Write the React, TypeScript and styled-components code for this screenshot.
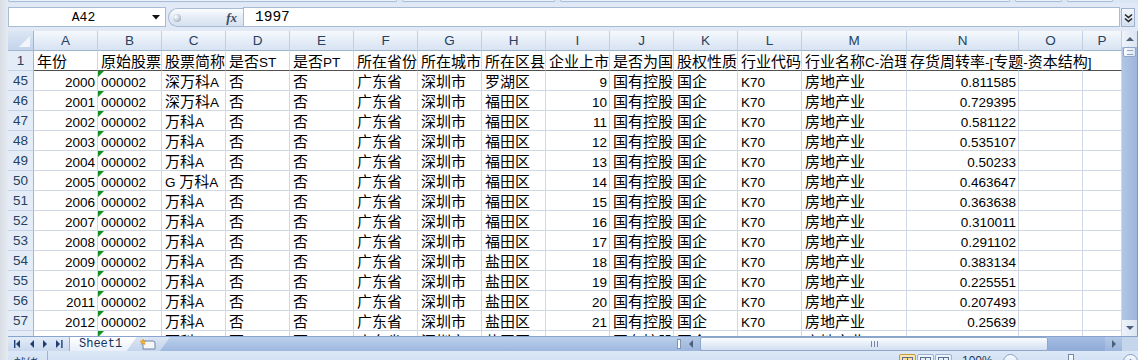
import React from 'react';
import styled, { createGlobalStyle } from 'styled-components';

const LATIN = `"Liberation Sans", Arial, sans-serif`;
const HAN = `"Noto Sans CJK SC", "Liberation Sans", sans-serif`;
const MONO = `"Liberation Mono", "DejaVu Sans Mono", monospace`;

const GlobalStyle = createGlobalStyle`
  html, body {
    margin: 0;
    padding: 0;
    background: #ffffff;
  }
  body {
    font-family: ${LATIN};
  }
`;

interface Column {
  name: string;
  width: number;
}

interface CellData {
  text: string;
  right?: boolean;
  flag?: boolean;
}

interface RowData {
  num: number;
  cells: CellData[];
}

const columns: Column[] = 'ABCDEFGHIJKL'
  .split('')
  .map((name) => ({ name, width: 64 }))
  .concat([
    { name: 'M', width: 105 },
    { name: 'N', width: 112 },
    { name: 'O', width: 64 },
    { name: 'P', width: 39 },
  ]);

const template = `26px ${columns.map((c) => `${c.width}px`).join(' ')}`;

const headerRow: string[] = [
  '年份',
  '原始股票',
  '股票简称',
  '是否ST',
  '是否PT',
  '所在省份',
  '所在城市',
  '所在区县',
  '企业上市',
  '是否为国',
  '股权性质',
  '行业代码',
  '行业名称C-治理',
  '存货周转率-[专题-资本结构]',
  '',
  '',
];

const names = ['深万科A', '深万科A', '万科A', '万科A', '万科A', 'G 万科A', '万科A', '万科A', '万科A', '万科A', '万科A', '万科A', '万科A', '万科A'];
const districts = ['罗湖区', ...Array(8).fill('福田区'), ...Array(5).fill('盐田区')];
const turnover = ['0.811585', '0.729395', '0.581122', '0.535107', '0.50233', '0.463647', '0.363638', '0.310011', '0.291102', '0.383134', '0.225551', '0.207493', '0.25639', ''];

const rows: RowData[] = names.map((name, i) => ({
  num: 45 + i,
  cells: [
    { text: String(2000 + i), right: true },
    { text: '000002', flag: true },
    { text: name },
    { text: '否' },
    { text: '否' },
    { text: '广东省' },
    { text: '深圳市' },
    { text: districts[i] },
    { text: i < 13 ? String(9 + i) : '', right: true },
    { text: '国有控股' },
    { text: '国企' },
    { text: 'K70' },
    { text: '房地产业' },
    { text: turnover[i], right: true },
    { text: '' },
    { text: '' },
  ],
}));

const ribbonGroups = [389, 153, 450, 47, 46];

// splits ascii runs from han runs so each gets its own font size
const Rich: React.FC<{ text: string }> = ({ text }) => (
  <>
    {text
      .split(/([\x20-\x7e]+)/)
      .filter(Boolean)
      .map((part, i) => (/^[\x20-\x7e]+$/.test(part) ? <Latin key={i}>{part}</Latin> : <span key={i}>{part}</span>))}
  </>
);

const Arrow: React.FC<{ dir: 'left' | 'right' | 'up' | 'down'; color?: string; size?: number }> = ({ dir, color = '#4c607d', size = 7 }) => {
  const pts = {
    left: '5,0 5,8 1,4',
    right: '1,0 1,8 5,4',
    up: '0,5 8,5 4,1',
    down: '0,1 8,1 4,5',
  }[dir];
  const vertical = dir === 'left' || dir === 'right';
  return (
    <svg width={vertical ? size - 1 : size + 1} height={vertical ? size + 1 : size - 1} viewBox={vertical ? '0 0 6 8' : '0 0 8 6'}>
      <polygon points={pts} fill={color} />
    </svg>
  );
};

export default function App() {
  return (
    <>
      <GlobalStyle />
      <Window>
        <Frame />
        <Main>
          <RibbonEdge>
            {ribbonGroups.map((w, i) => (
              <RibbonGroup key={i} $w={w} />
            ))}
          </RibbonEdge>

          <FormulaBar>
            <NameBox>
              <NameText>A42</NameText>
              <svg width="8" height="5" viewBox="0 0 8 5">
                <polygon points="0,0 8,0 4,4.5" fill="#111" />
              </svg>
            </NameBox>
            <FxPill>
              <Knob />
              <Fx>fx</Fx>
            </FxPill>
            <FormulaInput>1997</FormulaInput>
            <ExpandButton>
              <svg width="9" height="10" viewBox="0 0 9 10">
                <path d="M1 1.5 L4.5 4.5 L8 1.5 M1 5.5 L4.5 8.5 L8 5.5" stroke="#222" strokeWidth="1.6" fill="none" />
              </svg>
            </ExpandButton>
          </FormulaBar>

          <SheetArea>
            <Grid>
              <Corner>
                <CornerMark />
              </Corner>
              {columns.map((c) => (
                <ColHead key={c.name}>{c.name}</ColHead>
              ))}

              <RowHead>1</RowHead>
              {headerRow.map((text, i) => (
                <Cell key={i} $frozen $spill={i === 13} $open={i === 13 || i === 14}>
                  <Rich text={text} />
                </Cell>
              ))}

              {rows.map((row) => (
                <React.Fragment key={row.num}>
                  <RowHead>{row.num}</RowHead>
                  {row.cells.map((cell, i) => (
                    <Cell key={i} $right={cell.right}>
                      {cell.flag && <ErrorFlag />}
                      <Rich text={cell.text} />
                    </Cell>
                  ))}
                </React.Fragment>
              ))}
            </Grid>

            <VScroll>
              <ScrollButton>
                <Arrow dir="up" />
              </ScrollButton>
              <VThumb>
                <VGrip />
              </VThumb>
              <VTrack />
              <ScrollButton>
                <Arrow dir="down" />
              </ScrollButton>
            </VScroll>
          </SheetArea>

          <TabBar>
            <TabNav>
              <NavIcon>
                <svg width="7" height="8" viewBox="0 0 7 8">
                  <rect x="0" y="0" width="1.4" height="8" fill="#1d3f75" />
                  <polygon points="6,0 6,8 2,4" fill="#1d3f75" />
                </svg>
              </NavIcon>
              <NavIcon>
                <Arrow dir="left" color="#1d3f75" />
              </NavIcon>
              <NavIcon>
                <Arrow dir="right" color="#1d3f75" />
              </NavIcon>
              <NavIcon>
                <svg width="7" height="8" viewBox="0 0 7 8">
                  <polygon points="0,0 0,8 4,4" fill="#1d3f75" />
                  <rect x="5.2" y="0" width="1.4" height="8" fill="#1d3f75" />
                </svg>
              </NavIcon>
            </TabNav>
            <SheetTab>Sheet1</SheetTab>
            <NewTab>
              <svg width="18" height="12" viewBox="0 0 18 12">
                <path d="M5 3 H15 a2 2 0 0 1 2 2 V11 H5 Z" fill="#f4f6fa" stroke="#6f86a8" strokeWidth="1" />
                <path d="M5 1 L5.9 3.1 L8 3 L6.4 4.4 L7 6.5 L5 5.3 L3 6.5 L3.6 4.4 L2 3 L4.1 3.1 Z" fill="#f6b23a" stroke="#d98a12" strokeWidth="0.5" />
              </svg>
            </NewTab>
            <TabFill />
            <SplitHandle />
            <HScrollLeft>
              <Arrow dir="left" />
            </HScrollLeft>
            <HThumb>
              <HGrip />
            </HThumb>
            <HTrack />
            <HScrollRight>
              <Arrow dir="right" />
            </HScrollRight>
            <ScrollCorner />
          </TabBar>

          <StatusBar>
            <Ready>就绪</Ready>
            <StatusSpacer />
            <ViewButtons>
              <ViewButton $active>
                <ViewGlyph />
              </ViewButton>
              <ViewButton>
                <ViewGlyph />
              </ViewButton>
              <ViewButton>
                <ViewGlyph />
              </ViewButton>
            </ViewButtons>
            <Percent>100%</Percent>
            <ZoomButton>−</ZoomButton>
            <ZoomSlider>
              <ZoomThumb />
            </ZoomSlider>
            <ZoomButton>+</ZoomButton>
          </StatusBar>
        </Main>
      </Window>
    </>
  );
}

const Window = styled.div`
  display: flex;
  width: 1138px;
  height: 360px;
  overflow: hidden;
  background: #ffffff;
`;

const Frame = styled.div`
  width: 8px;
  flex-shrink: 0;
  background: linear-gradient(to right, #d8dde5, #e6eaf0);
`;

const Main = styled.div`
  display: flex;
  flex-direction: column;
  width: 1130px;
  flex-shrink: 0;
`;

const RibbonEdge = styled.div`
  display: flex;
  gap: 5px;
  height: 3px;
  flex-shrink: 0;
  background: #dbe6f4;
  overflow: hidden;
`;

const RibbonGroup = styled.div<{ $w: number }>`
  width: ${(p) => p.$w}px;
  height: 2px;
  box-sizing: border-box;
  border: 1px solid #a9bdd8;
  border-top: none;
  border-radius: 0 0 3px 3px;
  background: #e9f0f9;
`;

const FormulaBar = styled.div`
  display: flex;
  align-items: flex-start;
  height: 28px;
  flex-shrink: 0;
  padding-top: 4px;
  box-sizing: border-box;
  background: #e0e9f5;
`;

const NameBox = styled.div`
  display: flex;
  align-items: center;
  width: 158px;
  height: 20px;
  box-sizing: border-box;
  padding-right: 5px;
  border: 1px solid #a8bbd5;
  background: #ffffff;
`;

const NameText = styled.div`
  flex: 1;
  text-align: center;
  font: 13px ${MONO};
  color: #000;
  padding-left: 6px;
`;

const FxPill = styled.div`
  display: flex;
  align-items: center;
  justify-content: space-between;
  width: 75px;
  height: 19px;
  margin: 1px 0 0 2px;
  padding: 0 6px 0 4px;
  box-sizing: border-box;
  border: 1px solid #a8bbd5;
  border-right: none;
  border-radius: 10px 0 0 10px;
  background: linear-gradient(#fbfdff, #e2eaf5 55%, #d6e1f0);
`;

const Knob = styled.div`
  width: 8px;
  height: 8px;
  border-radius: 50%;
  background: radial-gradient(circle at 35% 35%, #ffffff, #b9c3d0 60%, #8e9aab);
`;

const Fx = styled.span`
  font: italic bold 13px "Liberation Serif", serif;
  color: #3d4b60;
`;

const FormulaInput = styled.div`
  flex: 1;
  height: 20px;
  box-sizing: border-box;
  padding-left: 11px;
  border: 1px solid #a8bbd5;
  background: #ffffff;
  font: 14.5px/18px ${MONO};
  color: #000;
`;

const ExpandButton = styled.div`
  display: flex;
  align-items: center;
  justify-content: center;
  width: 14px;
  height: 19px;
  margin: 1px 3px 0 1px;
  box-sizing: border-box;
  border: 1px solid #9fb3cf;
  background: linear-gradient(#f3f7fc, #d3dfef);
`;

const SheetArea = styled.div`
  display: flex;
  height: 305px;
  flex-shrink: 0;
  overflow: hidden;
`;

const Grid = styled.div`
  display: grid;
  grid-template-columns: ${template};
  grid-auto-rows: 20px;
  align-content: start;
  width: 1114px;
  flex-shrink: 0;
  overflow: hidden;
  background: #ffffff;
`;

const Corner = styled.div`
  display: flex;
  align-items: flex-end;
  justify-content: flex-end;
  padding: 0 3px 3px 0;
  box-sizing: border-box;
  border-right: 1px solid #9eb6ce;
  border-bottom: 1px solid #9eb6ce;
  background: linear-gradient(#dbe6f4, #c3d4ec);
`;

const CornerMark = styled.div`
  width: 0;
  height: 0;
  border-left: 11px solid transparent;
  border-bottom: 11px solid #f2f6fb;
`;

const ColHead = styled.div`
  display: flex;
  align-items: center;
  justify-content: center;
  box-sizing: border-box;
  border-right: 1px solid #c0cfe2;
  border-bottom: 1px solid #9eb6ce;
  background: linear-gradient(#f6f9fd, #e4ecf7 55%, #d8e3f2);
  font: 13.5px ${LATIN};
  color: #27415f;
  overflow: hidden;
`;

const RowHead = styled.div`
  display: flex;
  align-items: center;
  justify-content: center;
  box-sizing: border-box;
  border-right: 1px solid #9eb6ce;
  border-bottom: 1px solid #c5d3e6;
  background: #e4ecf7;
  font: 13.5px ${LATIN};
  color: #27415f;
`;

const Cell = styled.div<{ $right?: boolean; $frozen?: boolean; $spill?: boolean; $open?: boolean }>`
  position: relative;
  box-sizing: border-box;
  padding: 0 2px 0 3px;
  border-right: 1px solid ${(p) => (p.$open ? 'transparent' : '#d0d7e5')};
  border-bottom: 1px solid ${(p) => (p.$frozen ? '#505050' : '#d0d7e5')};
  text-align: ${(p) => (p.$right ? 'right' : 'left')};
  white-space: nowrap;
  overflow: ${(p) => (p.$spill ? 'visible' : 'hidden')};
  font: 15px/19px ${HAN};
  color: #000;
`;

const Latin = styled.span`
  font: 13.5px ${LATIN};
`;

const ErrorFlag = styled.div`
  position: absolute;
  top: 0;
  left: 0;
  width: 0;
  height: 0;
  border-top: 6px solid #10921e;
  border-right: 6px solid transparent;
`;

const VScroll = styled.div`
  display: flex;
  flex-direction: column;
  width: 16px;
  flex-shrink: 0;
  box-sizing: border-box;
  border-right: 1px solid #7d98c2;
  background: linear-gradient(to right, #b2c6e4, #9db6dc);
`;

const ScrollButton = styled.div`
  display: flex;
  align-items: center;
  justify-content: center;
  height: 16px;
  flex-shrink: 0;
  background: linear-gradient(to right, #eef3fa, #dbe5f2);
`;

const VThumb = styled.div`
  display: flex;
  align-items: center;
  justify-content: center;
  height: 10px;
  margin: 0 1px;
  flex-shrink: 0;
  box-sizing: border-box;
  border: 1px solid #8ea6c8;
  border-radius: 2px;
  background: linear-gradient(to right, #fbfdff, #dbe6f4);
`;

const VGrip = styled.div`
  width: 6px;
  height: 3px;
  border-top: 1px solid #8ea6c8;
  border-bottom: 1px solid #8ea6c8;
`;

const VTrack = styled.div`
  flex: 1;
`;

const TabBar = styled.div`
  display: flex;
  height: 15px;
  flex-shrink: 0;
  box-sizing: border-box;
  border-top: 1px solid #8aa5cd;
  background: linear-gradient(#bcd0eb, #9db7de);
`;

const TabNav = styled.div`
  display: flex;
  align-items: center;
  justify-content: space-around;
  width: 62px;
  flex-shrink: 0;
  padding: 0 2px;
  box-sizing: border-box;
  background: linear-gradient(#e3ecf8, #c9d8ee);
  border-right: 1px solid #93aed6;
`;

const NavIcon = styled.div`
  display: flex;
  align-items: center;
`;

const SheetTab = styled.div`
  width: 67px;
  flex-shrink: 0;
  padding-left: 9px;
  box-sizing: border-box;
  clip-path: polygon(0 0, 100% 0, calc(100% - 10px) 100%, 0 100%);
  background: linear-gradient(#ffffff, #e8eff9);
  font: 12px/14px ${MONO};
  color: #15315e;
`;

const NewTab = styled.div`
  display: flex;
  align-items: center;
  width: 43px;
  flex-shrink: 0;
  margin-left: -10px;
  padding-left: 11px;
  box-sizing: border-box;
  clip-path: polygon(10px 0, 100% 0, calc(100% - 10px) 100%, 0 100%);
  background: linear-gradient(#dce6f4, #c3d4ec);
`;

const TabFill = styled.div`
  flex: 1;
`;

const SplitHandle = styled.div`
  width: 4px;
  margin: 2px 0;
  box-sizing: border-box;
  border: 1px solid #7e94b6;
  background: #ffffff;
`;

const HScrollLeft = styled.div`
  display: flex;
  align-items: center;
  justify-content: center;
  width: 19px;
  flex-shrink: 0;
  background: linear-gradient(#b5c9e6, #9cb5db);
`;

const HScrollRight = styled(HScrollLeft)`
  width: 17px;
`;

const HThumb = styled.div`
  display: flex;
  align-items: center;
  justify-content: center;
  width: 348px;
  flex-shrink: 0;
  box-sizing: border-box;
  border: 1px solid #8ea6c8;
  border-radius: 2px;
  background: linear-gradient(#fbfdff, #e3ebf6 55%, #d2dff0);
`;

const HGrip = styled.div`
  width: 5px;
  height: 6px;
  border-left: 1px solid #6f87ab;
  border-right: 1px solid #6f87ab;
  background: linear-gradient(to right, transparent 2px, #6f87ab 2px, #6f87ab 3px, transparent 3px);
`;

const HTrack = styled.div`
  width: 57px;
  flex-shrink: 0;
  background: linear-gradient(#a5bde1, #8eaad6);
`;

const ScrollCorner = styled.div`
  width: 16px;
  flex-shrink: 0;
  background: #c5d5ec;
`;

const StatusBar = styled.div`
  display: flex;
  align-items: flex-start;
  height: 22px;
  flex-shrink: 0;
  padding-top: 3px;
  box-sizing: border-box;
  background: linear-gradient(#dce8f7, #c7d8ef);
`;

const Ready = styled.div`
  width: 40px;
  height: 18px;
  margin-top: -3px;
  padding: 3px 0 0 6px;
  box-sizing: border-box;
  border-right: 1px solid #9db2d1;
  font: 12px ${HAN};
  color: #1e395b;
`;

const StatusSpacer = styled.div`
  flex: 1;
`;

const ViewButtons = styled.div`
  display: flex;
  gap: 1px;
  margin-right: 10px;
`;

const ViewButton = styled.div<{ $active?: boolean }>`
  display: flex;
  align-items: center;
  justify-content: center;
  width: 17px;
  height: 15px;
  box-sizing: border-box;
  border: 1px solid ${(p) => (p.$active ? '#c29b3d' : '#9db2d1')};
  border-radius: 2px;
  background: ${(p) => (p.$active ? 'linear-gradient(#fde9b4, #f7c768)' : 'linear-gradient(#f1f6fc, #d5e2f2)')};
`;

const ViewGlyph = styled.div`
  width: 9px;
  height: 7px;
  border: 1px solid #5a6f8f;
  background: linear-gradient(to right, transparent 4px, #5a6f8f 4px, #5a6f8f 5px, transparent 5px);
`;

const Percent = styled.div`
  width: 41px;
  font: 12px ${LATIN};
  color: #1e395b;
`;

const ZoomButton = styled.div`
  display: flex;
  align-items: center;
  justify-content: center;
  width: 15px;
  height: 15px;
  box-sizing: border-box;
  border: 1px solid #8aa2c6;
  border-radius: 50%;
  background: linear-gradient(#f7faff, #d6e2f2);
  font: bold 11px ${LATIN};
  color: #3b5278;
`;

const ZoomSlider = styled.div`
  display: flex;
  justify-content: center;
  width: 105px;
  height: 15px;
  background: linear-gradient(transparent 7px, #8aa2c6 7px, #8aa2c6 8px, transparent 8px);
`;

const ZoomThumb = styled.div`
  width: 6px;
  height: 12px;
  box-sizing: border-box;
  border: 1px solid #6f87ab;
  background: linear-gradient(#ffffff, #dce6f3);
`;

export {};
